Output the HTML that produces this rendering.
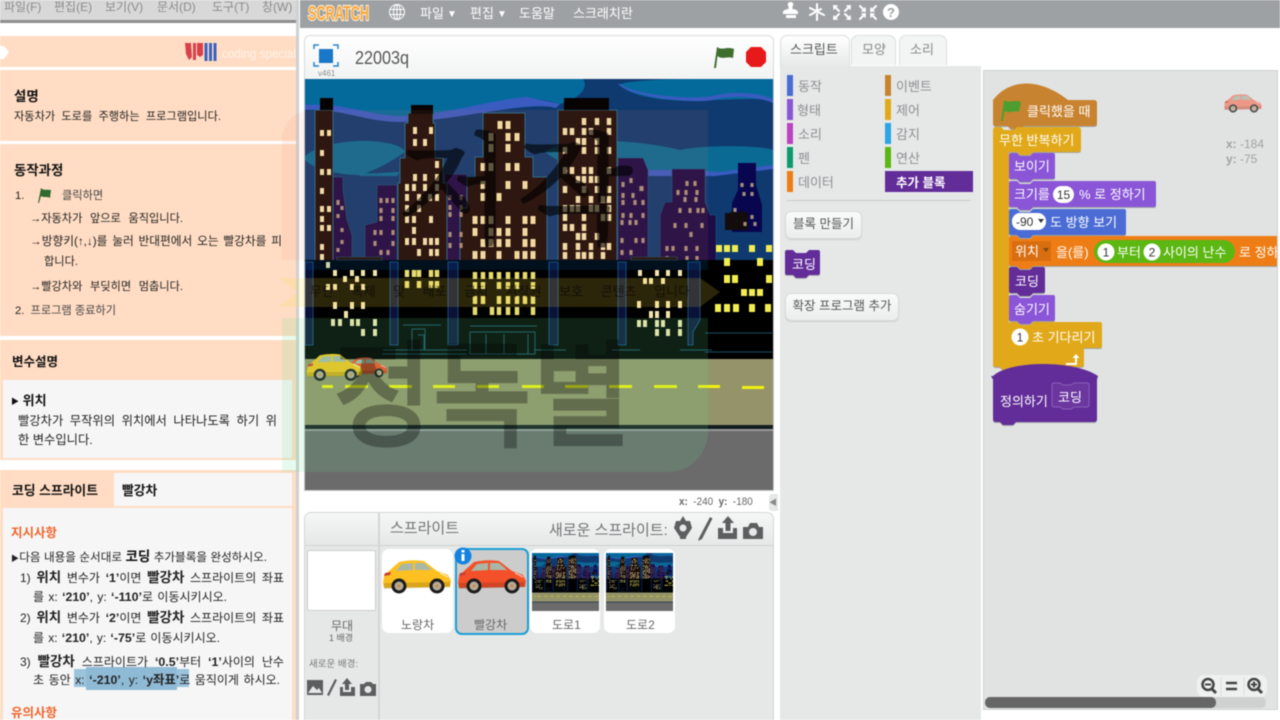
<!DOCTYPE html>
<html lang="ko"><head><meta charset="utf-8"><title>Scratch</title>
<style>
*{box-sizing:border-box}
html,body{margin:0;padding:0;width:1280px;height:720px;overflow:hidden;background:#fff}
body{font-family:"Liberation Sans","Noto Sans CJK KR",sans-serif}
#r{position:absolute;left:0;top:0;width:1280px;height:720px;overflow:hidden;filter:blur(.45px)}
.a{position:absolute}
.t{position:absolute;white-space:nowrap;line-height:16px;height:16px;font-size:11.2px;color:#222;margin-top:1px}
.j{text-align:justify;text-align-last:justify}
.b{font-weight:700;color:#111}
.h{font-size:13.4px}
.l{font-size:12px}
.l b{font-size:12.4px}
.l b.x{font-size:13.5px}
.m{color:#8b8b8b;font-size:12px}
.o{color:#f0652b;font-weight:700;font-size:12.5px}
.g{color:#8c9090;font-size:13px}
.btn{position:absolute;border:1px solid #d8dada;border-radius:6px;background:linear-gradient(#fafafa,#ebeded);box-shadow:0 1px 1px #ccc;color:#555;font-size:12.5px;text-align:center;white-space:nowrap}
svg text{font-family:"Liberation Sans","Noto Sans CJK KR",sans-serif}
</style></head><body><div id="r">

<!-- defs -->
<svg width="0" height="0" style="position:absolute">
<defs>
<symbol id="car" viewBox="0 0 70 38">
<path d="M1 25 L2 18 L7 13 L17 4 Q30 1 42 3 L55 13 L66 17 L69 23 L68 29 L2 30Z" fill="currentColor"/>
<path d="M2 25 L68 24 L68 29 L2 31Z" fill="#000" opacity=".14"/>
<path d="M20 6 L31 5 L31 12 L14 13Z M33 5 L42 5 L50 12 L33 12Z" fill="#a9b8a6"/>
<path d="M3 15 L9 14 L8 17 L2 18Z" fill="#c8402a"/>
<path d="M58 15L66 19" stroke="#fff" stroke-width="1.200" opacity=".7"/>
<circle cx="17" cy="28" r="7.500" fill="#1c1c1c"/><circle cx="17" cy="28" r="4.500" fill="#b5aa98"/><circle cx="17" cy="28" r="1.500" fill="#d08a40"/>
<circle cx="55" cy="28" r="7.500" fill="#1c1c1c"/><circle cx="55" cy="28" r="4.500" fill="#b5aa98"/><circle cx="55" cy="28" r="1.500" fill="#d08a40"/>
</symbol>
<symbol id="st" viewBox="305 79 468 411" preserveAspectRatio="none">
<rect x="305" y="79" width="468" height="411" fill="#0f3a70"/>
<path d="M305 79H583C590 90 575 100 560 104C545 100 535 98 525 99C490 102 440 118 400 118C370 118 345 104 305 106Z" fill="#046a9c"/>
<path d="M305 105C345 102 370 116 400 116C440 116 490 100 527 97L560 104L556 108C530 100 450 122 400 122C365 122 340 108 305 110Z" fill="#3a5cc0"/>
<path d="M620 84 Q640 79 700 79H773V100C740 96 700 104 660 99C640 96 625 92 620 84Z" fill="#046a9c"/>
<path d="M618 84C630 97 690 104 712 100C735 95 755 96 773 103V99C755 92 735 91 712 96C690 100 635 95 620 84Z" fill="#3a5cc0"/>
<path d="M305 156C330 135 400 138 405 152C385 166 370 172 360 175C340 175 315 170 305 160Z" fill="#0a6a94"/>
<path d="M355 172C370 175 385 172 400 172L397 176H360Z M545 152C570 135 640 140 680 150C700 145 760 145 773 150V168C730 175 690 172 650 174C600 175 565 168 545 152Z" fill="#0a6a94"/>
<path d="M620 170H680L720 172L773 165V169L715 176L650 176Z" fill="#3a5cc0"/>
<g fill="#1d0c46" stroke="#1f5a80" stroke-width=".5">
<path d="M333 177H343V190L347 220L352 235V262H333Z"/>
<path d="M377 185H397V262H365V225L377 222Z"/>
<path d="M445 174H467V262H445Z"/>
<path d="M618 158H643L648 170V262H618Z"/>
<path d="M672 169H705V202L710 215H716V262H660V215L665 202H672Z"/>
</g>
<path d="M738 163H756V185L762 205V232H732V203L738 190Z" fill="#07064e"/>
<path d="M725 213H730L732 211L737 213L742 211L748 213V230H725Z" fill="#120c0c"/>
<g fill="#1d0e0a" stroke="#1f6a8c" stroke-width="1">
<path d="M315 110H333V262H315Z"/>
<path d="M411 113H433V123H435V158H443V183H447V262H398V183H400V158H405V123H408V113Z"/>
<path d="M483 113H525V157H533V177H547V262H460V208H467V177H475V157H483Z"/>
<path d="M558 110H617V262H558Z"/>
</g>
<rect x="320" y="98" width="13" height="12" fill="#060302"/>
<rect x="411" y="105" width="22" height="9" fill="#060302"/>
<rect x="564" y="98" width="45" height="12" fill="#060302"/>
<g fill="none" stroke="#f3e5ae">
<path stroke-width="4" d="M322 130v6M329 130v6M322 150v6M322 169v6M329 169v6M322 188v6M322 206v6M329 206v6M322 216v6M322 225v6M329 225v6M322 244v6M322 254v6M415 127v7M431 127v7M415 139v7M425 139v7M437 161v7M415 174v7M425 174v7M437 174v7M407 184v7M414 184v7M425 184v7M437 184v7M407 194v7M419 194v7M430 194v7M437 194v7M407 205v7M419 205v7M407 216v7M414 216v7M431 216v7M414 227v7M407 238v7M414 238v7M425 238v7M431 238v7M437 238v7M419 249v7M431 249v7M437 249v7"/>
<path stroke-width="5" stroke="#f2e2a6" d="M500 121v8M508 121v8M491 133v8M508 133v8M517 133v8M491 144v8M508 144v8M483 163v8M491 163v8M508 163v8M517 163v8M483 181v8M508 181v8M525 181v8M483 193v8M499 193v8M475 216v8M483 216v8M491 216v8M508 216v8M525 216v8M533 216v8M475 228v8M491 228v8M499 228v8M508 228v8M525 228v8M483 239v8M491 239v8M499 239v8M508 239v8M525 239v8M533 239v8M475 251v8M483 251v8M499 251v8M517 251v8M525 251v8M533 251v8"/>
<path stroke-width="4.500" d="M584 118v7M597 118v7M609 118v7M565 128v7M572 128v7M584 128v7M591 128v7M609 128v7M578 138v7M584 138v7M597 138v7M565 147v7M584 147v7M597 147v7M609 147v7M565 167v7M572 167v7M584 167v7M591 167v7M609 167v7M578 176v7M584 176v7M591 176v7M597 176v7M565 186v7M584 186v7M597 186v7M609 186v7M578 196v7M591 196v7M603 196v7M609 196v7M565 205v7M572 205v7M578 205v7M591 205v7M597 205v7M609 205v7M565 214v7M584 214v7M603 214v7M609 214v7M565 224v7M572 224v7M584 224v7M578 233v7M584 233v7M597 233v7M565 243v7M578 243v7M591 243v7M603 243v7M609 243v7M565 252v7M578 252v7M584 252v7M591 252v7M603 252v7"/>
</g>
<g fill="none" stroke="#a8907a" stroke-width="3.200">
<path d="M338 200v5M342 206v4M338 214v4M342 228v4M342 240v4M338 248v4M381 198v5M387 198v5M393 198v5M381 208v5M393 208v5M381 216v5M393 216v5M375 230v5M381 230v5M393 230v5M375 241v5M393 241v5M381 250v5M388 250v5M450 195v5M461 195v5M450 205v5M461 205v5M450 212v5M461 212v5M450 232v5M461 232v5M450 243v5M461 243v5M623 182v5M631 178v5M642 186v5M623 193v5M633 193v5M641 186v5M623 200v5M635 200v5M643 200v5M623 213v5M631 213v5M643 213v5M622 220v5M630 220v5M636 220v5M622 238v5M636 238v5M643 238v5M622 250v5M631 250v5M687 181v5M695 181v5M678 190v5M686 190v5M697 190v5M685 197v5M696 197v5M680 208v5M690 208v5M698 208v5M703 208v5M675 223v5M686 223v5M702 223v5M691 232v5M667 246v5M673 246v5M686 246v5M697 246v5M667 256v5M687 256v5M697 256v5M742 183v4M752 183v4M744 192v4M752 192v4M735 208v4M752 215v4M745 222v4M755 222v4"/>
</g>
<rect x="305" y="260" width="468" height="99" fill="#000"/>
<g fill="#0a1238" stroke="#1c5a92" stroke-width=".8">
<path d="M305 262H313V345H305Z M390 262H398V345H390Z M448 262H458V345H448Z M549 262H558V345H549Z M618 262H626V345H618Z M688 262H700V320L693 332V345H688Z"/>
</g>
<path d="M337 257H382V260H337Z M631 257H677V260H631Z" fill="#1a0f0c" stroke="#1f5a70" stroke-width=".6"/>
<g fill="none" stroke="#f3e5ae" stroke-width="4">
<path d="M328 262v6M335 270v6M352 270v6M363 270v6M375 270v6M345 276v6M357 276v6M328 284v6M335 284v6M352 284v6M363 284v6M640 270v6M657 270v6M668 270v6M680 270v6M645 278v6M651 278v6M663 278v6"/>
<path d="M335 302v7M352 302v7M363 302v7M346 311v7M333 319v7M340 319v7M352 319v7M358 319v7M375 319v7M363 329v7M375 329v7M639 301v7M657 301v7M668 301v7M680 301v7M651 311v7M657 311v7M668 311v7M639 320v7M645 320v7M657 320v7M663 320v7M680 320v7M657 329v7M668 329v7M680 329v7"/>
</g>
<g fill="none" stroke="#e6dc70" stroke-width="4.500">
<path d="M407 270v7M414 270v7M419 270v7M431 270v7M437 270v7M407 281v7M419 281v7M431 281v7M437 281v7M475 272v7M483 272v7M491 272v7M499 272v7M508 272v7M517 272v7M525 272v7M533 272v7M475 282v7M483 282v7M499 282v7M508 282v7M517 282v7M533 282v7M475 296v8M483 296v8M499 296v8M508 296v8M517 296v8M525 296v8M533 296v8M475 307v8M492 307v8M499 307v8M508 307v8M517 307v8M533 307v8"/>
</g>
<g fill="none" stroke="#f2ee50" stroke-width="6">
<path d="M719 245v7M727 245v7M735 245v7M752 245v7M769 245v7M727 258v8M760 258v8M727 275v8M735 275v8M769 275v8M718 304v8M727 304v8M736 304v8M752 304v8M768 304v8M744 289v7M752 289v7M760 289v7"/>
</g>
<g fill="none" stroke="#174f66" stroke-width="1">
<path d="M403 325H441M412 329H425V350H412ZM418 335H424V350M470 326H537M470 332H535V354H470ZM486 334V354M504 334V354M528 334V354M705 333H772M705 352H772M383 350H467M534 350H566M382 354H467M612 350H640M680 350H712"/>
</g>
<rect x="305" y="359" width="468" height="66" fill="#94936a"/>
<rect x="305" y="425" width="468" height="4" fill="#141c20"/>
<rect x="305" y="429" width="468" height="2" fill="#9a9a9a"/>
<rect x="305" y="431" width="468" height="59" fill="#6b6b6b"/>
<path fill="none" stroke="#f2f20c" stroke-width="3" d="M322 386.500h11M345 386.500h23M389 386.500h23M433 386.500h22M477 386.500h22M522 386.500h22M565 386.500h23M609 386.500h23M654 386.500h23M698 386.500h22M742 387.500h22"/>
</symbol>
</defs>
</svg>

<!-- top bars -->
<div class="a" style="left:0;top:0;width:298px;height:20px;background:#d8d8d8"></div>
<div class="a" style="left:0;top:20px;width:298px;height:3px;background:#8e8e8e"></div>
<div class="t m" style="left:4px;top:-2px">파일(F)</div>
<div class="t m" style="left:54px;top:-2px">편집(E)</div>
<div class="t m" style="left:105px;top:-2px">보기(V)</div>
<div class="t m" style="left:157px;top:-2px">문서(D)</div>
<div class="t m" style="left:212px;top:-2px">도구(T)</div>
<div class="t m" style="left:262px;top:-2px">창(W)</div>

<!-- left panel -->
<div class="a" style="left:0;top:36px;width:296px;height:684px;background:#ffdcc3"></div>
<div class="a" style="left:296px;top:0;width:3px;height:720px;background:#cfd0d0"></div>
<div class="a" style="left:0;top:67px;width:296px;height:3px;background:#fff"></div>
<div class="a" style="left:0;top:141px;width:296px;height:3px;background:#fff"></div>
<div class="a" style="left:0;top:336px;width:296px;height:4px;background:#fff"></div>
<div class="a" style="left:3px;top:380px;width:289px;height:78px;background:#f6f6f6"></div>
<div class="a" style="left:0;top:460px;width:296px;height:10px;background:#fff"></div>
<div class="a" style="left:114px;top:473px;width:178px;height:33px;background:#f6f6f6"></div>
<div class="a" style="left:3px;top:508px;width:289px;height:212px;background:#f6f6f6"></div>
<svg class="a" style="left:0;top:36px" width="296" height="32">
<path d="M0 10H4L9 16L4 23H0Z" fill="#fff"/>
<path d="M185 7h6l1 14-3 3-3-6zM193 7h3v17h-3zM197 7h6v12l-3 2-3-2z" fill="#d8404a"/>
<path fill="none" stroke="#3a62c0" stroke-width="3" d="M206 7v18M210.500 7v18M215 7v18"/>
<text x="222" y="22" font-size="13" fill="#fff" fill-opacity=".65" textLength="74" lengthAdjust="spacingAndGlyphs">coding special</text>
</svg>
<div class="t b h" style="left:14px;top:88px">설명</div>
<div class="t j" style="left:14px;top:108px;width:207px">자동차가 도로를 주행하는 프로그램입니다.</div>
<div class="t b h" style="left:14px;top:162px">동작과정</div>
<div class="t" style="left:15px;top:187px">1.</div>
<svg class="a" style="left:37px;top:187px" width="16" height="17"><path d="M1 16L4 1C7 4 10 2 14 3L13 11C10 9 7 11 4 9L2 16Z" fill="#2f6a2e"/></svg>
<div class="t" style="left:62px;top:187px;color:#444">클릭하면</div>
<div class="t j" style="left:30px;top:210px;width:153px">→자동차가 앞으로 움직입니다.</div>
<div class="t j" style="left:30px;top:233px;width:252px;font-size:11.700px">→방향키(↑,↓)를 눌러 반대편에서 오는 빨강차를 피</div>
<div class="t" style="left:44px;top:253px">합니다.</div>
<div class="t j" style="left:30px;top:278px;width:153px">→빨강차와 부딪히면 멈춥니다.</div>
<div class="t" style="left:15px;top:302px">2.&nbsp; <span style="color:#444">프로그램 종료하기</span></div>
<div class="t b" style="left:12px;top:353px;font-size:12.500px">변수설명</div>
<div class="t b" style="left:11px;top:392px;font-size:13px"><span style="font-size:8px;vertical-align:1px">▶</span> 위치</div>
<div class="t j" style="left:18px;top:412px;width:259px;font-size:12.300px">빨강차가 무작위의 위치에서 나타나도록 하기 위</div>
<div class="t" style="left:18px;top:431px;font-size:12.300px">한 변수입니다.</div>
<div class="t b" style="left:12px;top:482px;font-size:12.800px">코딩 스프라이트</div>
<div class="t b" style="left:122px;top:482px;font-size:12.800px">빨강차</div>
<div class="t o" style="left:11px;top:524px">지시사항</div>
<div class="t j" style="left:11px;top:548px;width:256px;font-size:11.600px"><span style="font-size:8px">▶</span>다음 내용을 순서대로 <b style="font-size:13.500px;color:#111">코딩</b> 추가블록을 완성하시오.</div>
<div class="t j l" style="left:20px;top:569px;width:264px">1) <b class="x">위치</b> 변수가 <b>‘1’</b>이면 <b class="x">빨강차</b> 스프라이트의 좌표</div>
<div class="t j l" style="left:33px;top:588px;width:194px">를 x: <b>‘210’</b>, y: <b>‘-110’</b>로 이동시키시오.</div>
<div class="t j l" style="left:20px;top:609px;width:264px">2) <b class="x">위치</b> 변수가 <b>‘2’</b>이면 <b class="x">빨강차</b> 스프라이트의 좌표</div>
<div class="t j l" style="left:33px;top:629px;width:187px">를 x: <b>‘210’</b>, y: <b>‘-75’</b>로 이동시키시오.</div>
<div class="a" style="left:74px;top:669px;width:115px;height:18px;background:#9cc3dc"></div>
<div class="a" style="left:86px;top:667px;width:91px;height:23px;background:#8fbad6"></div>
<div class="t j l" style="left:20px;top:653px;width:264px">3) <b class="x">빨강차</b> 스프라이트가 <b>‘0.5’</b>부터 <b>‘1’</b>사이의 난수</div>
<div class="t j l" style="left:33px;top:671px;width:247px">초 동안 x: <b>‘-210’</b>, y: <b>‘y좌표’</b>로 움직이게 하시오.</div>
<div class="t o" style="left:11px;top:704px">유의사항</div>

<!-- scratch top bar -->
<div class="a" style="left:300px;top:0;width:980px;height:28px;background:#9ea1a3"></div>
<svg class="a" style="left:300px;top:0" width="980" height="28">
<text x="8" y="20" font-size="20" font-weight="700" fill="#f7a93f" stroke="#ffefd8" stroke-width="2.200" textLength="61" lengthAdjust="spacingAndGlyphs" paint-order="stroke">SCRATCH</text>
<g fill="none" stroke="#fff" stroke-width="1"><circle cx="97" cy="12" r="7.500"/><ellipse cx="97" cy="12" rx="3.500" ry="7.500"/><path d="M90 9.500h14M90 14.500h14M97 4.500v15"/></g>
<g fill="#fff">
<text x="120" y="18" font-size="13">파일</text><text x="147" y="17" font-size="10">▼</text>
<text x="170" y="18" font-size="13">편집</text><text x="197" y="17" font-size="10">▼</text>
<text x="219" y="18" font-size="13">도움말</text>
<text x="273" y="18" font-size="13">스크래치란</text>
<path d="M486 3a3.500 3.500 0 0 1 5 0c1 2-1 3-.5 6 3 .5 5 1 5.500 3v2h-15v-2c.5-2 2.500-2.500 5.500-3 .5-3-1.500-4-.5-6zM484 15h10v3h-10z" transform="translate(2,0)"/>
</g>
<g fill="none" stroke="#fff" stroke-width="2" stroke-linecap="round">
<path d="M510 8L524 15M510 15L521 9M517 4V11M517 14V20"/>
<path d="M534 6L539 11M550 6L545 11M534 19L539 14M550 19L545 14"/><path stroke-width="1.500" d="M534 6h3M534 6v3M550 6h-3M550 6v3M534 19h3M534 19v-3M550 19h-3M550 19v-3"/>
<path d="M560 6L565 11M576 6L571 11M560 19L565 14M576 19L571 14"/><path stroke-width="1.500" d="M565 11h-3M565 11v-3M571 11h3M571 11v-3M565 14h-3M565 14v3M571 14h3M571 14v3"/>
</g>
<circle cx="591" cy="12" r="8" fill="#fff"/>
<text x="591" y="17" font-size="13" font-weight="700" fill="#9ea1a3" text-anchor="middle">?</text>
</svg>

<!-- stage header -->
<div class="a" style="left:304px;top:35px;width:470px;height:46px;border:1px solid #d8dada;border-bottom:0;border-radius:6px 6px 0 0;background:linear-gradient(#fff,#f1f2f2)"></div>
<svg class="a" style="left:312px;top:42px" width="30" height="36">
<rect x="7" y="7" width="14" height="14" fill="#1a78c8"/>
<path fill="none" stroke="#2b86c8" stroke-width="1.500" d="M2 7V3H7M21 3H26V7M2 20V24H7M21 24H26V20"/>
<text x="6" y="34" font-size="8" fill="#8a8d8d">v461</text>
</svg>
<div class="t" style="left:355px;top:47px;font-size:18px;color:#555;height:20px;line-height:20px;transform:scaleX(.9);transform-origin:0 0">22003q</div>
<svg class="a" style="left:712px;top:42px" width="56" height="30">
<path d="M2 26L5 5C10 9 14 4 22 7L21 16C15 14 10 18 5.500 14L4 26Z" fill="#3e6f2f"/>
<path d="M39 5H49L54 10V20L49 25H39L34 20V10Z" fill="#e8191b"/>
</svg>

<!-- stage -->
<svg class="a" style="left:304px;top:79px" width="470" height="412"><rect width="470" height="412" fill="#c8c8c8"/><use href="#st" x="1" y="0" width="468" height="411"/></svg>
<svg class="a" style="left:346px;top:352px;color:#f0502a" width="42" height="31"><use href="#car" width="42" height="31"/></svg>
<svg class="a" style="left:306px;top:352px;color:#f4c41e" width="57" height="31"><use href="#car" width="57" height="31"/></svg>
<div class="t" style="left:679px;top:493px;font-size:11px;color:#666;transform:scaleX(.9);transform-origin:0 0"><b>x:</b>&nbsp; -240&nbsp; <b>y:</b>&nbsp; -180</div>
<div class="a" style="left:769px;top:494px;width:9px;height:17px;background:#e6e8e8;border-radius:3px 0 0 3px;color:#888;font-size:8px;line-height:17px">◀</div>

<!-- sprites panel -->
<div class="a" style="left:304px;top:512px;width:470px;height:208px;background:#e6e8e8;border:1px solid #d4d6d6;border-bottom:0;border-radius:7px 7px 0 0"></div>
<div class="a" style="left:305px;top:513px;width:468px;height:33px;background:linear-gradient(#f5f6f6,#e6e8e8);border-bottom:1px solid #d0d2d2;border-radius:6px 6px 0 0"></div>
<div class="a" style="left:378px;top:513px;width:2px;height:207px;background:#d4d6d6"></div>
<div class="t" style="left:390px;top:520px;font-size:15px;color:#707474">스프라이트</div>
<div class="t" style="left:549px;top:522px;font-size:15px;color:#707474">새로운 스프라이트:</div>
<svg class="a" style="left:670px;top:515px" width="100" height="30" fill="#5c5f60">
<path d="M13 1L16 6H20L22 13L16 22V24H10V22L4 13L6 6H10Z"/><circle cx="13" cy="13" r="3.500" fill="#e6e8e8"/>
<path d="M29 23L40 2L42.500 3.500L32 24L28 26Z"/>
<path d="M58 1L64 8H60.500V16H55.500V8H52Z"/><path d="M48 13H53V18H63V13H67V24H48Z"/>
<path d="M73 12H78L80 8H87L89 12H93V24H73Z"/><circle cx="83" cy="17" r="4" fill="#e6e8e8"/>
</svg>
<div class="a" style="left:307px;top:550px;width:69px;height:61px;background:#fff;border:1px solid #ccc;border-radius:2px"></div>
<div class="t" style="left:331px;top:617px;font-size:12px;color:#666">무대</div>
<div class="t" style="left:329px;top:629px;font-size:9px;color:#666">1 배경</div>
<div class="t" style="left:309px;top:656px;font-size:9.500px;color:#777">새로운 배경:</div>
<svg class="a" style="left:306px;top:678px" width="72" height="24" fill="#5c5f60">
<path d="M1 2H17V17H1Z"/><path d="M2 15L7 8L11 12L13 10L16 15Z" fill="#e6e8e8"/>
<path d="M21 17L29 1L31 2L23 18Z"/>
<path d="M41 0L46 6H43V12H39V6H36Z"/><path d="M34 9H37V14H45V9H49V18H34Z"/>
<path d="M54 6H58L60 4H65L67 6H70V18H54Z"/><circle cx="62" cy="11.500" r="3.500" fill="#e6e8e8"/>
</svg>

<div class="a" style="left:382px;top:549px;width:71px;height:84px;background:#fff;border-radius:7px"></div>
<div class="a" style="left:455px;top:548px;width:74px;height:87px;background:#cccccc;border:2.500px solid #1c9fd4;border-radius:7px"></div>
<div class="a" style="left:530px;top:549px;width:70px;height:84px;background:#fff;border-radius:7px"></div>
<div class="a" style="left:604px;top:549px;width:71px;height:84px;background:#fff;border-radius:7px"></div>
<svg class="a" style="left:382px;top:558px;color:#fdc020" width="70" height="38"><use href="#car" width="70" height="38"/></svg>
<svg class="a" style="left:457px;top:558px;color:#f4512a" width="70" height="38"><use href="#car" width="70" height="38"/></svg>
<svg class="a" style="left:532px;top:553px" width="67" height="58"><use href="#st" width="67" height="58"/></svg>
<svg class="a" style="left:606px;top:553px" width="67" height="58"><use href="#st" width="67" height="58"/></svg>
<svg class="a" style="left:454px;top:546px" width="18" height="20"><circle cx="9" cy="10" r="8.500" fill="#1483e0"/><rect x="7.500" y="8" width="3" height="7" fill="#fff"/><rect x="7.500" y="4" width="3" height="2.500" fill="#fff"/></svg>
<div class="t" style="left:401px;top:616px;font-size:12px;color:#666">노랑차</div>
<div class="t" style="left:474px;top:616px;font-size:12px;color:#666">빨강차</div>
<div class="t" style="left:552px;top:616px;font-size:12px;color:#666">도로1</div>
<div class="t" style="left:626px;top:616px;font-size:12px;color:#666">도로2</div>

<!-- tabs and palette -->
<div class="a" style="left:780px;top:66px;width:201px;height:654px;background:#e6e8e8"></div>
<div class="a" style="left:780px;top:35px;width:70px;height:33px;border:1px solid #dcdede;border-bottom:0;border-radius:7px 7px 0 0;background:linear-gradient(#fff,#e6e8e8)"></div>
<div class="a" style="left:851px;top:35px;width:45px;height:30px;border:1px solid #dcdede;border-bottom:0;border-radius:7px 7px 0 0;background:#f3f4f4"></div>
<div class="a" style="left:899px;top:35px;width:48px;height:30px;border:1px solid #dcdede;border-bottom:0;border-radius:7px 7px 0 0;background:#f3f4f4"></div>
<div class="t" style="left:790px;top:41px;font-size:13px;color:#555">스크립트</div>
<div class="t" style="left:862px;top:41px;font-size:13px;color:#888">모양</div>
<div class="t" style="left:910px;top:41px;font-size:13px;color:#888">소리</div>

<div class="a" style="left:787px;top:75px;width:6px;height:21px;background:#4a6cd4"></div>
<div class="a" style="left:787px;top:99px;width:6px;height:21px;background:#8a55d7"></div>
<div class="a" style="left:787px;top:123px;width:6px;height:21px;background:#bb42c3"></div>
<div class="a" style="left:787px;top:147px;width:6px;height:21px;background:#0e9a6c"></div>
<div class="a" style="left:787px;top:171px;width:6px;height:21px;background:#ee7d16"></div>
<div class="a" style="left:885px;top:75px;width:6px;height:21px;background:#c88330"></div>
<div class="a" style="left:885px;top:99px;width:6px;height:21px;background:#e1a91a"></div>
<div class="a" style="left:885px;top:123px;width:6px;height:21px;background:#2ca5e2"></div>
<div class="a" style="left:885px;top:147px;width:6px;height:21px;background:#5cb712"></div>
<div class="a" style="left:885px;top:171px;width:88px;height:21px;background:#632d99"></div>
<div class="t g" style="left:798px;top:78px">동작</div>
<div class="t g" style="left:797px;top:102px">형태</div>
<div class="t g" style="left:798px;top:126px">소리</div>
<div class="t g" style="left:798px;top:150px">펜</div>
<div class="t g" style="left:798px;top:174px">데이터</div>
<div class="t g" style="left:896px;top:78px">이벤트</div>
<div class="t g" style="left:896px;top:102px">제어</div>
<div class="t g" style="left:896px;top:126px">감지</div>
<div class="t g" style="left:896px;top:150px">연산</div>
<div class="t b" style="left:896px;top:174px;font-size:12.500px;color:#fff">추가 블록</div>
<div class="a" style="left:787px;top:200px;width:184px;height:1px;background:#c8cbcb"></div>
<div class="btn" style="left:785px;top:211px;width:77px;height:28px;line-height:25px">블록 만들기</div>
<div class="btn" style="left:785px;top:293px;width:114px;height:28px;line-height:25px">확장 프로그램 추가</div>

<!-- scripts area -->
<div class="a" style="left:983px;top:70px;width:295px;height:640px;background:#e1e3e3;border:1px solid #d0d2d2"></div>
<svg class="a" style="left:780px;top:60px;filter:drop-shadow(0 1px 0 rgba(0,0,0,.22))" width="500" height="380">
<path transform="translate(5,190)" d="M0 2q0-2 2-2h6l3 3h10l3-3h9q2 0 2 2v21q0 2-2 2h-9l-3 3h-10l-3-3h-6q-2 0-2-2z" fill="#632d99"/>
<text x="12" y="209" font-size="13" fill="#fff">코딩</text>
</svg>
<svg class="a" style="left:984px;top:71px" width="293" height="360">
<g transform="translate(-984,-71)" style="filter:drop-shadow(0 1px 0 rgba(0,0,0,.28))">
<path d="M993 100C1010 78 1040 78 1068 100H1094q3 0 3 3v20q0 3-3 3H1024l-3 3h-10l-3-3h-12q-3 0-3-3z" fill="#c88330"/>
<path d="M993 130q0-3 3-3h5l3 3h10l3-3h61q3 0 3 3v19q0 3-3 3H1033l-3 3h-10l-3-3h-8V347h8l3 3h10l3-3h48q3 0 3 3v14q0 3-3 3H1016l-3 3h-10l-3-3h-4q-3 0-3-3z" fill="#e1a91a"/>
<path transform="translate(1009,153)" d="M0 2q0-2 2-2h6l3 3h10l3-3h20q2 0 2 2v22q0 2-2 2h-20l-3 3h-10l-3-3h-6q-2 0-2-2z" fill="#8a55d7"/>
<path transform="translate(1009,181)" d="M0 2q0-2 2-2h6l3 3h10l3-3h121q2 0 2 2v22q0 2-2 2h-121l-3 3h-10l-3-3h-6q-2 0-2-2z" fill="#8a55d7"/>
<path transform="translate(1009,209)" d="M0 2q0-2 2-2h6l3 3h10l3-3h91q2 0 2 2v22q0 2-2 2h-91l-3 3h-10l-3-3h-6q-2 0-2-2z" fill="#4a6cd4"/>
<path transform="translate(1009,236)" d="M0 2q0-2 2-2h6l3 3h10l3-3h270v30h-270l-3 3h-10l-3-3h-6q-2 0-2-2z" fill="#ee7d16"/>
<path transform="translate(1009,267)" d="M0 2q0-2 2-2h6l3 3h10l3-3h10q2 0 2 2v22q0 2-2 2h-10l-3 3h-10l-3-3h-6q-2 0-2-2z" fill="#632d99"/>
<path transform="translate(1009,295)" d="M0 2q0-2 2-2h6l3 3h10l3-3h20q2 0 2 2v22q0 2-2 2h-20l-3 3h-10l-3-3h-6q-2 0-2-2z" fill="#8a55d7"/>
<path transform="translate(1009,322)" d="M0 2q0-2 2-2h6l3 3h10l3-3h67q2 0 2 2v22q0 2-2 2h-67l-3 3h-10l-3-3h-6q-2 0-2-2z" fill="#e1a91a"/>
<path d="M993 376C1010 360 1075 360 1098 376L1097 379V419q0 3-3 3H1016l-3 3h-10l-3-3h-4q-3 0-3-3V379L991 376z" fill="#632d99"/>
</g>
<g transform="translate(-984,-71)" font-size="13" fill="#fff">
<path d="M1001 121L1004 100C1009 104 1015 99 1021 102L1019 112C1014 110 1009 114 1004.500 111L1003 121Z" fill="#4c9f2f"/>
<text x="1027" y="116">클릭했을 때</text>
<text x="999" y="145">무한 반복하기</text>
<text x="1014" y="171">보이기</text>
<text x="1014" y="199">크기를</text>
<rect x="1053" y="186" width="21" height="17" rx="8.500" fill="#fff"/><text x="1063.500" y="199" fill="#333" text-anchor="middle" font-size="12">15</text>
<text x="1079" y="199">% 로 정하기</text>
<rect x="1012" y="213" width="34" height="17" rx="8" fill="#fff"/><text x="1016" y="226" fill="#333" font-size="12">-90</text><path d="M1038 219h6l-3 4z" fill="#333"/>
<text x="1050" y="227">도 방향 보기</text>
<rect x="1012" y="241" width="39" height="20" fill="#d96e10"/>
<text x="1015" y="256">위치</text><path d="M1043 248h6l-3 4z" fill="#7a4a10"/>
<text x="1056" y="257">을(를)</text>
<rect x="1094" y="240" width="141" height="23" rx="11.500" fill="#5cb712"/>
<circle cx="1106" cy="252" r="8.500" fill="#fff"/><text x="1106" y="256.500" fill="#333" text-anchor="middle" font-size="12">1</text>
<text x="1117" y="257">부터</text>
<circle cx="1152" cy="252" r="8.500" fill="#fff"/><text x="1152" y="256.500" fill="#333" text-anchor="middle" font-size="12">2</text>
<text x="1163" y="257">사이의 난수</text>
<text x="1239" y="257">로 정하</text>
<text x="1015" y="286">코딩</text>
<text x="1014" y="314">숨기기</text>
<circle cx="1020" cy="337" r="8.500" fill="#fff"/><text x="1020" y="341.500" fill="#333" text-anchor="middle" font-size="12">1</text>
<text x="1032" y="342">초 기다리기</text>
<path d="M1066 363h9v-5h-2.500l3.500-4 3.500 4h-2.500v7h-11z" fill="#fff"/>
<text x="1000" y="406">정의하기</text>
<path d="M1052 385q0-2 2-2h6l3 2h8l3-2h13q2 0 2 2v20q0 2-2 2h-13l-3 2h-8l-3-2h-6q-2 0-2-2z" fill="#6b379f" stroke="#8a5fb8"/>
<text x="1058" y="402">코딩</text>
</g>
</svg>
<svg class="a" style="left:1223px;top:93px;color:#f0806a;opacity:.75" width="40" height="21"><use href="#car" width="40" height="21"/></svg>
<div class="t b" style="left:1226px;top:135px;font-size:12px;color:#a0a3a3">x: <span style="font-weight:400">-184</span></div>
<div class="t b" style="left:1226px;top:150px;font-size:12px;color:#a0a3a3">y: <span style="font-weight:400">-75</span></div>

<div class="a" style="left:985px;top:697px;width:281px;height:11px;background:#cfd1d1;border-radius:5px"></div>
<div class="a" style="left:985px;top:697px;width:231px;height:11px;background:#666;border-radius:5px"></div>
<div class="a" style="left:1197px;top:675px;width:70px;height:22px;background:#eff0f0;border-radius:7px"></div>
<svg class="a" style="left:1197px;top:675px" width="70" height="22">
<path d="M24 2v19M47 2v19" stroke="#dcdede"/>
<g fill="none" stroke="#444" stroke-width="2.500"><circle cx="11" cy="9.500" r="5.500"/><path d="M15 14l4 4" stroke-width="3"/><circle cx="57" cy="9.500" r="5.500"/><path d="M61 14l4 4" stroke-width="3"/><path stroke-width="2" d="M8 9.500h6M54 9.500h6M57 6.500v6"/><path d="M29 8h11M29 14h11"/></g>
</svg>

<!-- overlaid watermark -->
<div class="a" style="left:282px;top:110px;width:426px;height:150px;background:rgba(230,120,90,.09);border-radius:30px 0 0 0"></div>
<div class="a" style="left:305px;top:260px;width:403px;height:10px;background:rgba(0,110,200,.14)"></div>
<svg class="a" style="left:278px;top:270px" width="450" height="48"><path d="M0 8H422L442 22L422 37H0L20 22Z" fill="#ffdc3c" fill-opacity=".17"/></svg>
<div class="a" style="left:282px;top:318px;width:426px;height:154px;background:rgba(101,220,140,.15);border-radius:0 0 40px 0"></div>
<div class="t" style="left:310px;top:283px;width:380px;font-size:13px;color:rgba(0,0,0,.55);text-align:justify;text-align-last:justify">무단 복제 및 배포 금지 저작권 보호 콘텐츠 입니다</div>
<div class="a" style="left:398px;top:118px;font-size:118px;line-height:150px;font-weight:400;color:#000;opacity:.6;white-space:nowrap;letter-spacing:6px;-webkit-text-stroke:3px #000;font-family:'Liberation Serif','Noto Serif CJK SC','Noto Sans CJK KR',serif">저작</div>
<div class="a" style="left:334px;top:322px;font-size:106px;line-height:140px;font-weight:400;color:#000;opacity:.3;white-space:nowrap;letter-spacing:2px;-webkit-text-stroke:4px #000;transform:scaleY(1.08);transform-origin:0 0;font-family:'Liberation Sans','Noto Sans CJK KR',sans-serif">정독별</div>

</div></body></html>
